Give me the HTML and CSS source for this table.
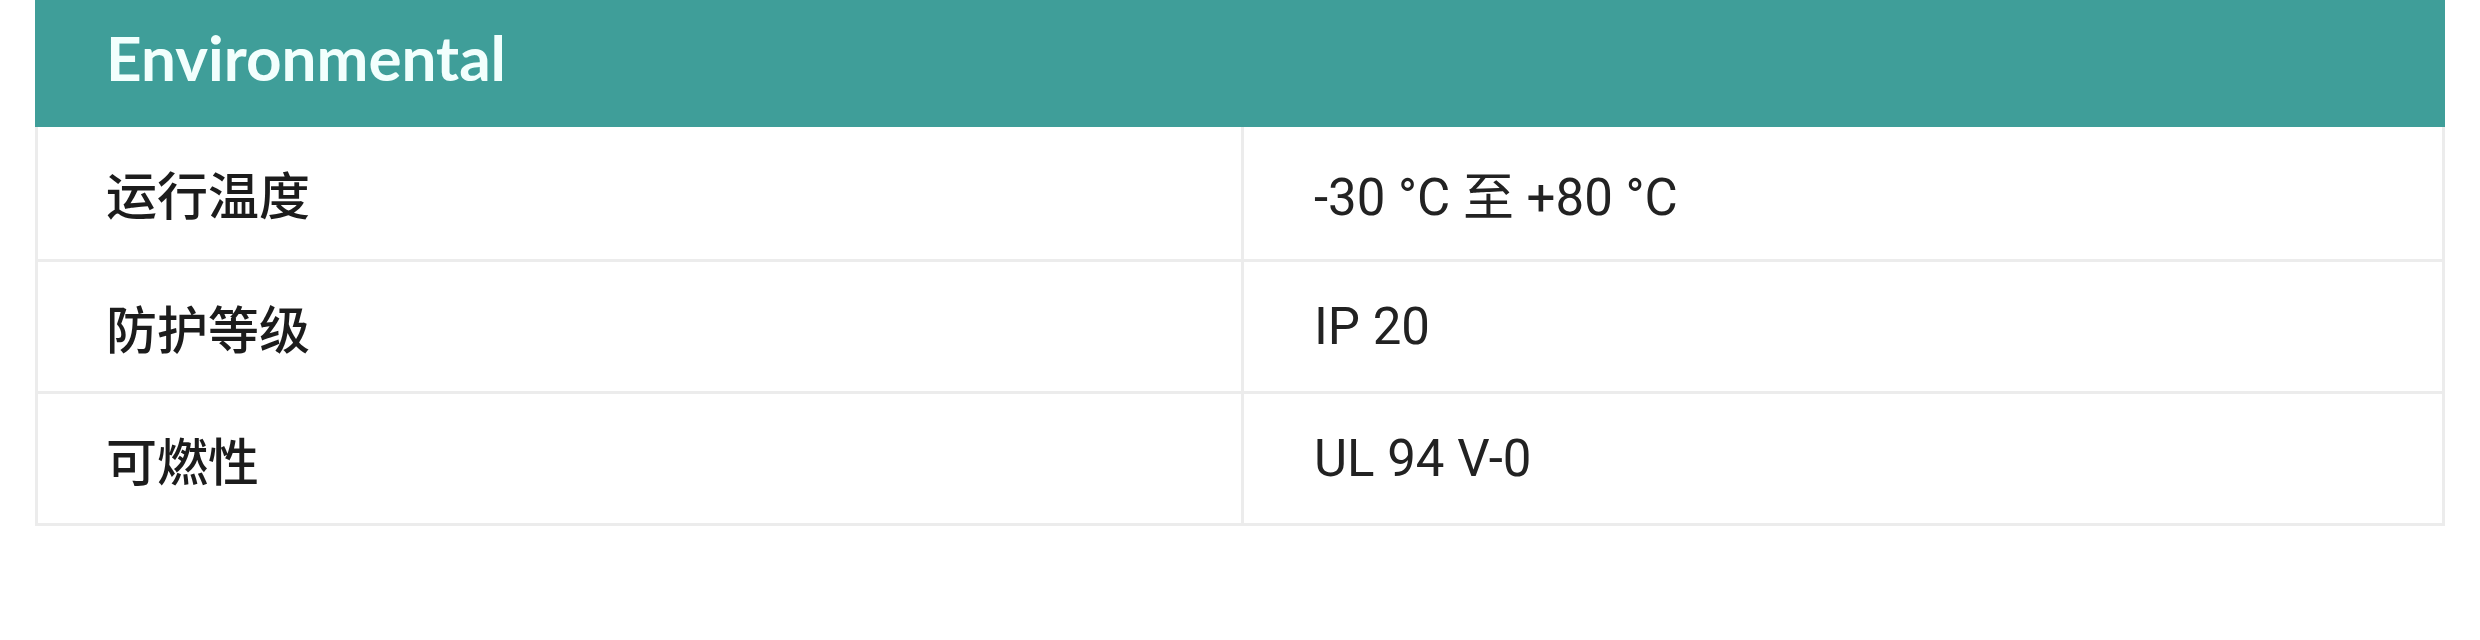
FILE: index.html
```html
<!DOCTYPE html>
<html lang="zh-CN">
<head>
<meta charset="utf-8">
<title>Environmental</title>
<link rel="stylesheet" href="styles.css">
</head>
<body>
<div class="page">
  <section class="spec">
    <div class="spec-head">Environmental</div>
    <div class="spec-row spec-row-first">
      <div class="spec-label">运行温度</div>
      <div class="spec-value">-30 °C 至 +80 °C</div>
    </div>
    <div class="spec-row">
      <div class="spec-label">防护等级</div>
      <div class="spec-value">IP 20</div>
    </div>
    <div class="spec-row">
      <div class="spec-label">可燃性</div>
      <div class="spec-value">UL 94 V-0</div>
    </div>
  </section>
</div>
</body>
</html>
```
FILE: styles.css
```css
html, body {
  margin: 0;
  padding: 0;
  background: #ffffff;
}
.page {
  padding: 0 35px 0 35px;
}
.spec {
  width: 2410px;
  display: flex;
  flex-direction: column;
}
.spec-head {
  height: 127px;
  background: #3f9e99;
  color: #f2fffd;
  font-family: Lato, "Noto Sans", sans-serif;
  font-weight: 700;
  font-size: 62px;
  display: flex;
  align-items: center;
  padding: 0 0 14px 71px;
  box-sizing: border-box;
}
.spec-row {
  display: grid;
  grid-template-columns: 1206px 1fr;
  height: 132px;
  border-left: 3px solid #ececec;
  border-right: 3px solid #ececec;
  border-bottom: 3px solid #ececec;
  box-sizing: border-box;
}
.spec-row-first {
  height: 135px;
}
.spec-label,
.spec-value {
  display: flex;
  align-items: center;
  font-family: Roboto, "Noto Sans CJK SC", sans-serif;
  font-size: 51px;
  color: #1c1c1c;
}
.spec-label {
  padding-left: 68px;
  border-right: 3px solid #ececec;
  font-weight: 500;
}
.spec-value {
  padding-left: 70px;
  font-weight: 400;
  color: #222222;
}
```
